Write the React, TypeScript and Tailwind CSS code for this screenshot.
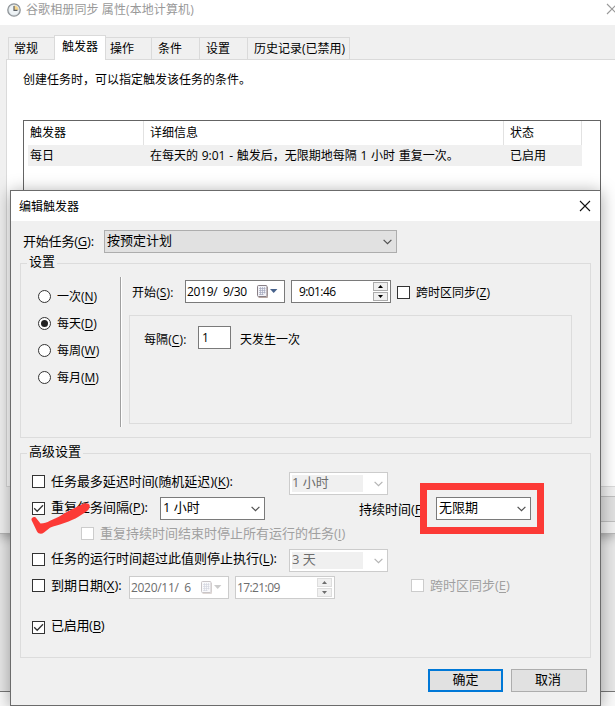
import React from "react";
import { clsx } from "clsx";

const Key = ({ k }: { k: string }) => (
  <>
    (<span className="underline underline-offset-2">{k}</span>)
  </>
);

const ClockIcon = () => (
  <svg width="14" height="14" viewBox="0 0 14 14">
    <circle cx="7" cy="7" r="6.2" fill="#dfe6ea" stroke="#8f9498" strokeWidth="1.3" />
    <circle cx="7" cy="7" r="4.6" fill="#eef3f6" />
    <path d="M7 7V2.4A4.6 4.6 0 0 1 11.6 7Z" fill="#f6d58c" />
    <path d="M7 3V7.3H10.5" fill="none" stroke="#5d6266" strokeWidth="1.2" />
  </svg>
);

const CloseIcon = ({ color }: { color: string }) => (
  <svg width="12" height="12" viewBox="0 0 12 12" className="shrink-0">
    <path d="M1 1L11 11M11 1L1 11" stroke={color} strokeWidth="1.1" />
  </svg>
);

const Chevron = ({ disabled }: { disabled?: boolean }) => (
  <svg width="9" height="6" viewBox="0 0 9 6" className="shrink-0">
    <path d="M0.6 0.8L4.5 4.7L8.4 0.8" fill="none" stroke={disabled ? "#b4b4b4" : "#505050"} strokeWidth="1.2" />
  </svg>
);

const Calendar = ({ disabled }: { disabled?: boolean }) => (
  <svg width="21" height="13" viewBox="0 0 21 13" opacity={disabled ? 0.45 : 1} className="shrink-0">
    <path d="M1.5 12.5H10.5V2" fill="none" stroke="#b9a9a4" />
    <rect x="0.5" y="0.5" width="9.5" height="11" rx="1" fill="#f3f3f8" stroke="#887f85" />
    <path d="M2 3.5H8.5M2 5.5H8.5M2 7.5H8.5M2 9.5H6.5M3.5 2V10M5.5 2V10M7.5 2V8.5" stroke="#a3a8bd" strokeWidth="0.7" />
    <path d="M13 4H20.4L16.7 8Z" fill={disabled ? "#8e8e8e" : "#47628c"} />
  </svg>
);

const Check = ({ checked, disabled, className }: { checked?: boolean; disabled?: boolean; className?: string }) => (
  <span
    className={clsx(
      "block size-[13px] shrink-0 border bg-white",
      disabled ? "border-[#cccccc]" : "border-[#333333]",
      className
    )}
  >
    {checked && (
      <svg width="11" height="11" viewBox="0 0 11 11">
        <path d="M1.2 5.3L4.2 8.3L10 2.3" fill="none" stroke="#333" strokeWidth="1.3" />
      </svg>
    )}
  </span>
);

const Combo = ({ value, disabled, className }: { value: string; disabled?: boolean; className?: string }) => (
  <div
    className={clsx(
      "flex h-[23px] shrink-0 items-center justify-between border bg-white text-[13px] leading-4",
      disabled ? "border-[#cccccc] pr-1 pl-0.5 text-[#6d6d6d]" : "border-[#7a7a7a] pr-1 pl-0.5",
      className
    )}
  >
    <span className={clsx("flex h-[17px] items-center pb-1 whitespace-pre", disabled && "w-[71px] bg-[#f0f0f0]")}>{value}</span>
    <Chevron disabled={disabled} />
  </div>
);

const DateBox = ({ value, disabled }: { value: string; disabled?: boolean }) => (
  <div
    className={clsx(
      "flex h-[23px] w-[100px] shrink-0 items-center justify-between border bg-white pr-1.5 pl-px text-xs",
      disabled ? "border-[#cccccc] text-[#6d6d6d]" : "border-[#7a7a7a]"
    )}
  >
    <span className="tracking-[-0.3px] whitespace-pre">{value}</span>
    <Calendar disabled={disabled} />
  </div>
);

const SpinButton = ({ up, disabled }: { up?: boolean; disabled?: boolean }) => (
  <span
    className={clsx(
      "flex h-[9px] w-[15px] items-center justify-center border bg-[#f0f0f0]",
      disabled ? "border-[#dddddd]" : "border-[#acacac]"
    )}
  >
    <svg width="5" height="3" viewBox="0 0 5 3">
      <path d={up ? "M0 3L2.5 0L5 3Z" : "M0 0L2.5 3L5 0Z"} fill={disabled ? "#6d6d6d" : "#000"} />
    </svg>
  </span>
);

const TimeBox = ({ value, disabled }: { value: string; disabled?: boolean }) => (
  <div
    className={clsx(
      "ml-1.5 flex h-[23px] w-[100px] shrink-0 items-center justify-between border bg-white pr-0.5 text-xs",
      disabled ? "border-[#cccccc] pl-px text-[#6d6d6d]" : "border-[#7a7a7a] pl-[7px]"
    )}
  >
    <span className="tracking-[-0.6px]">{value}</span>
    <span className="flex flex-col gap-px">
      <SpinButton up disabled={disabled} />
      <SpinButton disabled={disabled} />
    </span>
  </div>
);

const Group = ({ title, className, children }: { title: string; className?: string; children: React.ReactNode }) => (
  <section className={clsx("ml-[9px] w-[571px] border border-[#dcdcdc]", className)}>
    <h2 className="-mt-[11px] ml-1.5 h-5 w-fit bg-[#f0f0f0] px-0.5 text-[13px] leading-4">{title}</h2>
    {children}
  </section>
);

const radios = [
  { label: "一次", k: "N" },
  { label: "每天", k: "D", on: true },
  { label: "每周", k: "W" },
  { label: "每月", k: "M" },
];

const tabs = [
  { label: "常规", cls: "w-[47px] border-l pl-[5px]" },
  { label: "触发器", cls: "", active: true },
  { label: "操作", cls: "w-[46px] pl-1" },
  { label: "条件", cls: "w-12 pl-1.5" },
  { label: "设置", cls: "w-12 pl-1.5" },
  { label: "历史记录(已禁用)", cls: "w-[102px] pl-1.5" },
];

const PropertiesWindow = () => (
  <div className="h-[534px] border-b border-[#b5b5b5] bg-[#f0f0f0] shadow-[0_3px_10px_rgba(0,0,0,0.3)]">
    <div className="flex h-[25px] items-start bg-white pt-[3px] pl-[7px] text-[#999999]">
      <ClockIcon />
      <span className="-mt-px ml-[5px] flex-1 text-xs leading-4 tracking-[0.1px]">谷歌相册同步 属性(本地计算机)</span>
      <span className="-mr-[3px]"><CloseIcon color="#999999" /></span>
    </div>
    <div className="flex h-[34px] items-end pl-2">
      {tabs.map((t) =>
        t.active ? (
          <div key={t.label} className="z-10 -mb-px -ml-px h-[25px] w-[52px] border-x border-t border-[#dadada] bg-white pl-[7px] leading-[21px]">
            {t.label}
          </div>
        ) : (
          <div key={t.label} className={clsx("h-[22px] border-t border-r border-[#dadada] leading-[21px] whitespace-nowrap", t.cls)}>
            {t.label}
          </div>
        )
      )}
    </div>
    <div className="ml-1.5 h-[428px] border-y border-l border-[#dadada] bg-white">
      <p className="pt-3 pl-4 leading-4">创建任务时，可以指定触发该任务的条件。</p>
      <div className="mt-8 ml-4 h-[315px] w-[578px] border border-[#646464] pl-1">
        <div className="flex h-6 w-[554px] leading-[23px]">
          <span className="w-[116px] border-r border-[#e2e2e2] pl-0.5">触发器</span>
          <span className="w-[360px] border-r border-[#e2e2e2] pl-1.5">详细信息</span>
          <span className="flex-1 border-r border-[#e2e2e2] pl-1.5">状态</span>
        </div>
        <div className="flex h-[21px] w-[554px] bg-[#f0f0f0] leading-[21px]">
          <span className="w-[116px] pl-0.5">每日</span>
          <span className="w-[360px] pl-1.5 [word-spacing:0.6px]">在每天的 9:01 - 触发后，无限期地每隔 1 小时 重复一次。</span>
          <span className="flex-1 pl-1.5">已启用</span>
        </div>
      </div>
    </div>
    <div className="mt-[9px] flex justify-end">
      <div className="h-[26px] w-10 border-y border-[#bfbfbf] bg-[#e1e1e1]" />
    </div>
  </div>
);

const ScheduleGroup = () => (
  <Group title="设置" className="mt-2.5 h-[175px]">
    <div className="flex pt-1">
      <div className="flex h-[150px] w-[99px] flex-col gap-[7px] pt-[9px] pl-[17px]">
        {radios.map((r) => (
          <div key={r.k} className="flex h-5 items-center">
            <span className="flex size-[13px] items-center justify-center rounded-full border border-[#333333] bg-white">
              {r.on && <span className="size-[7px] rounded-full bg-[#222222]" />}
            </span>
            <span className="ml-1.5 pt-0.5">
              {r.label}
              <Key k={r.k} />
            </span>
          </div>
        ))}
      </div>
      <div className="h-[150px] w-0.5 border-r border-l border-r-white border-l-[#a0a0a0]" />
      <div className="pt-[3px]">
        <div className="flex h-[23px] items-center">
          <span className="ml-2.5 w-[53px] pt-0.5 tracking-[0.1px]">
            开始
            <Key k="S" />:
          </span>
          <DateBox value="2019/  9/30" />
          <TimeBox value="9:01:46" />
          <Check className="mt-0.5 ml-1.5" />
          <span className="ml-1.5 pt-0.5">
            跨时区同步
            <Key k="Z" />
          </span>
        </div>
        <div className="mt-3 ml-[7px] h-[109px] w-[443px] border border-[#dcdcdc] pt-2.5 pl-3.5">
          <div className="flex h-[23px] items-center">
            <span className="w-[54px] pt-1 tracking-[0.1px]">
              每隔
              <Key k="C" />:
            </span>
            <span className="h-[23px] w-[33px] border border-[#7a7a7a] bg-white pl-[3px] leading-[22px]">1</span>
            <span className="ml-[9px] pt-1">天发生一次</span>
          </div>
        </div>
      </div>
    </div>
  </Group>
);

const AdvancedGroup = () => (
  <Group title="高级设置" className="mt-[15px] h-[205px] text-[13px]">
    <div className="pt-[9px] pl-[11px] leading-4">
      <div className="flex h-[25px]">
        <Check className="mt-[3px]" />
        <span className="mt-px ml-1.5 w-[238px] tracking-[-0.05px]">
          任务最多延迟时间(随机延迟)
          <Key k="K" />:
        </span>
        <Combo value="1 小时" disabled className="w-[99px]" />
      </div>
      <div className="flex h-[27px]">
        <Check checked className="mt-[5px]" />
        <span className="mt-0.5 ml-1.5 w-[109px]">
          重复任务间隔
          <Key k="P" />:
        </span>
        <Combo value="1 小时" className="w-[105px]" />
        <span className="mt-1 ml-[94px] w-[61px] whitespace-nowrap">
          持续时间(<span className="underline underline-offset-2">F</span>
        </span>
        <Combo value="无限期" className="ml-4 w-[95px]" />
      </div>
      <div className="flex h-[25px] pl-[49px] text-[#a0a0a0]">
        <Check disabled className="mt-[3px]" />
        <span className="mt-px ml-1.5">
          重复持续时间结束时停止所有运行的任务
          <Key k="I" />
        </span>
      </div>
      <div className="flex h-[27px]">
        <Check className="mt-1" />
        <span className="mt-px ml-1.5 w-[238px]">
          任务的运行时间超过此值则停止执行
          <Key k="L" />:
        </span>
        <Combo value="3 天" disabled className="w-[99px]" />
      </div>
      <div className="flex h-[45px]">
        <Check className="mt-[3px]" />
        <span className="mt-px ml-1.5 w-[78px]">
          到期日期
          <Key k="X" />:
        </span>
        <DateBox value="2020/11/  6" disabled />
        <TimeBox value="17:21:09" disabled />
        <Check disabled className="mt-[3px] ml-[76px]" />
        <span className="mt-px ml-1.5 text-[#a0a0a0]">
          跨时区同步
          <Key k="E" />
        </span>
      </div>
      <div className="flex">
        <Check checked />
        <span className="-mt-1 ml-1.5 tracking-[-0.3px]">
          已启用
          <Key k="B" />
        </span>
      </div>
    </div>
  </Group>
);

const EditTriggerDialog = () => (
  <div className="absolute top-[190px] left-2.5 h-[516px] w-[591px] border border-[#6b6b6b] bg-[#f0f0f0] shadow-[0_2px_16px_rgba(0,0,0,0.35)]">
    <div className="flex h-[30px] items-center justify-between bg-white pr-[9px] pl-2">
      <span className="pt-px">编辑触发器</span>
      <CloseIcon color="#111111" />
    </div>
    <div className="mt-[9px] flex h-[23px] items-center pl-3 text-[13px]">
      <span className="w-[81px] tracking-[-0.2px]">
        开始任务
        <Key k="G" />:
      </span>
      <div className="flex h-[23px] w-[293px] items-center justify-between border border-[#adadad] bg-[#e1e1e1] pr-1 pl-0.5">
        <span className="pb-px">按预定计划</span>
        <Chevron />
      </div>
    </div>
    <ScheduleGroup />
    <AdvancedGroup />
    <div className="mt-[11px] flex justify-end gap-2 pr-[13px] text-[13px]">
      <button className="h-[23px] w-[75px] border-2 border-[#0078d7] bg-[#e1e1e1] pb-0.5 leading-[17px]">确定</button>
      <button className="h-[23px] w-[76px] border border-[#adadad] bg-[#e1e1e1] pr-0.5 pb-0.5 leading-[19px]">取消</button>
    </div>
  </div>
);

const App = () => {
  return (
    <div className="relative h-[706px] w-[615px] overflow-hidden bg-[#e8e8e8] font-['Open_Sans','Noto_Sans_CJK_SC',sans-serif] text-xs text-black">
      <PropertiesWindow />
      <div className="mt-[157px] h-[15px] border-t border-[#777777] bg-[#fafafa]" />
      <EditTriggerDialog />
      {/* red pen annotations */}
      <div className="absolute top-[483px] left-[420px] h-[51px] w-[124px] border-[7px] border-[#fc3a36]" />
      <svg className="absolute top-[500px] left-[28px]" width="66" height="40" viewBox="0 0 66 40">
        <path
          d="M3.5 20C3 17 7 16 8.5 18.5L12.5 23.5C16 23 19 22.5 22 20.7C28 18.5 34 15 38.7 12L53 4.8C57 2.5 61 2.8 61.7 5.5C62.3 8 60 11 57 12.5L50 17C43 21 38 22.5 32 24.5C27 26 24 26.5 22 27.8L16 32.5C13.5 34.5 10.5 34 9 31.5Z"
          fill="#fc3a36"
        />
      </svg>
    </div>
  );
};

export default App;
